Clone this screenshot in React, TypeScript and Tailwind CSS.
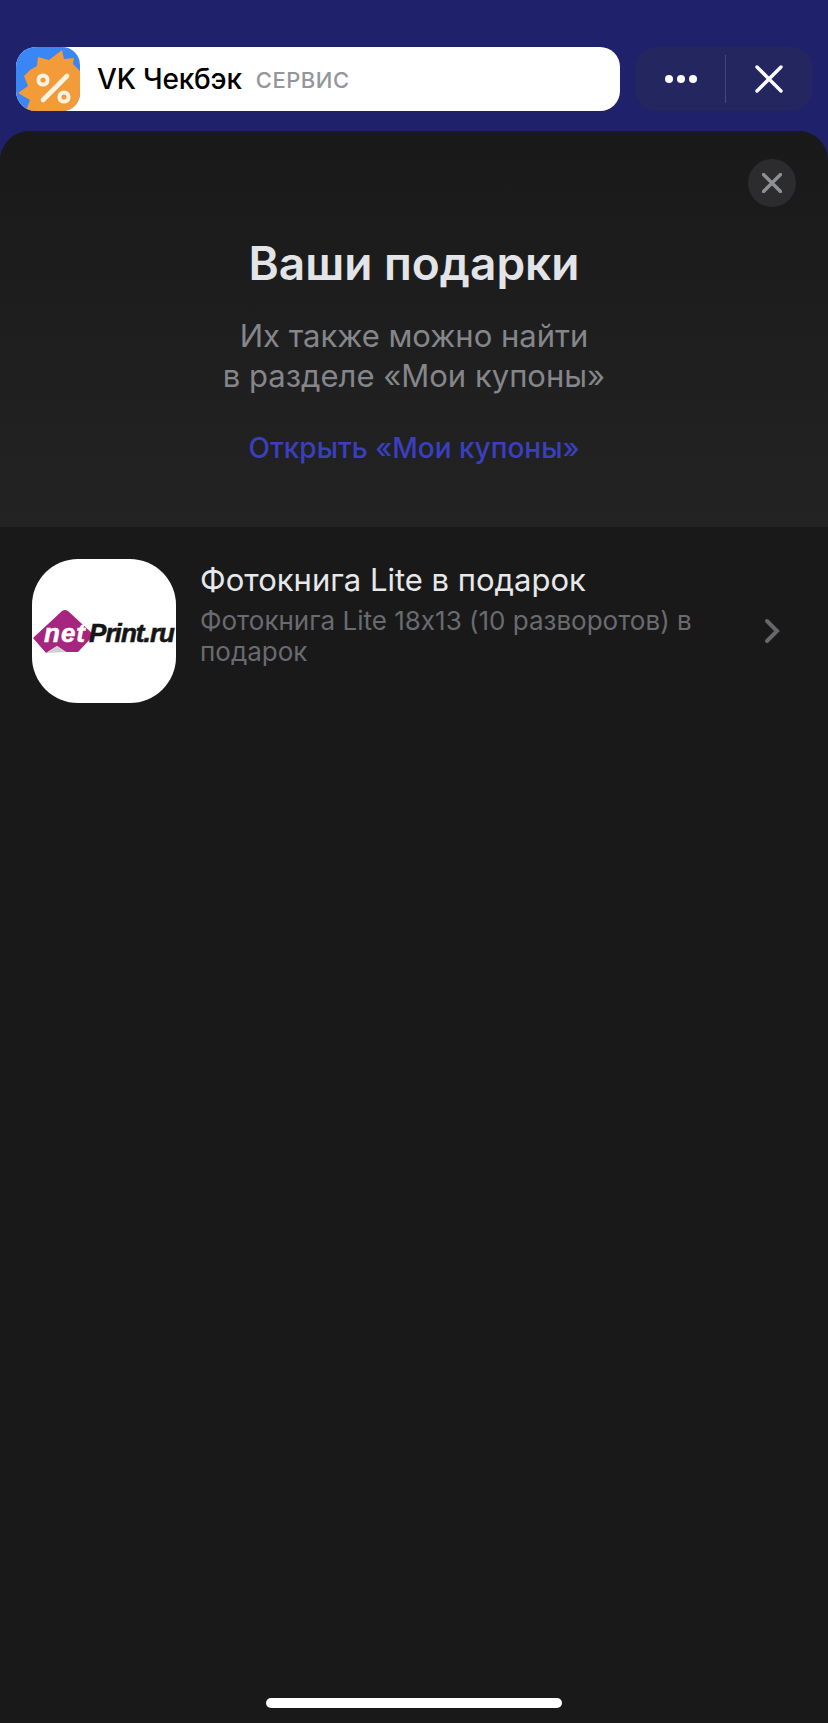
import React from "react";

const AppIcon = () => (
  <svg viewBox="0 0 64 64" className="w-16 h-16 shrink-0 rounded-[18px]">
    <rect width="64" height="64" fill="#3a86f4" />
    <path
      d="M10 64 L14 53 L2 46 L12 39 L8 29 L14 23 L21 19 L22 10 L33 13 L46 3 L48 12 L58 11 L57 17 L64 24 L64 64 Z"
      fill="#f29b38"
    />
    <circle cx="27" cy="33" r="4.6" fill="none" stroke="#fdf3e4" strokeWidth="4" />
    <circle cx="48" cy="50" r="4.6" fill="none" stroke="#fdf3e4" strokeWidth="4" />
    <path d="M27 53 L51 29" stroke="#fdf3e4" strokeWidth="4.6" strokeLinecap="round" />
  </svg>
);

const NetPrintLogo = () => (
  <svg viewBox="0 0 144 144" className="w-36 h-36">
    <path d="M1 79 L30 52 Q33 50 36 52 L62 76 L46 93 L34 93 L25 87 L14 94 Z" fill="#a6257e" />
    <path d="M14 94 L25 87 L34 93 Z" fill="#cfcfcf" />
    <text x="12" y="83" fontFamily="Liberation Sans" fontWeight="700" fontStyle="italic" fontSize="26" fill="#ffffff" stroke="#ffffff" strokeWidth="0.5" textLength="41">
      net
    </text>
    <text x="57" y="83" fontFamily="Liberation Sans" fontWeight="700" fontStyle="italic" fontSize="26" fill="#151515" stroke="#151515" strokeWidth="0.6" textLength="86">
      Print.ru
    </text>
  </svg>
);

export default function App() {
  return (
    <div className="w-[828px] h-[1723px] flex flex-col bg-[#1f226b] overflow-hidden font-['Inter',sans-serif] [font-feature-settings:'calt'_0]">
      <div className="flex gap-4 px-4 pt-[47px] pb-5">
        <div className="w-[604px] h-16 bg-white rounded-[20px] overflow-hidden flex items-center">
          <AppIcon />
          <span className="ml-[17px] text-[28px] font-medium text-black tracking-[-0.2px]">VK Чекбэк</span>
          <span className="ml-[14px] text-[22px] font-medium text-[#94969c] tracking-[0.5px] mt-[2px]">СЕРВИС</span>
        </div>
        <div className="w-[176px] h-16 rounded-[20px] bg-[#24275f] flex items-center">
          <div className="w-[89px] flex justify-center gap-1">
            <span className="w-2 h-2 rounded-full bg-white" />
            <span className="w-2 h-2 rounded-full bg-white" />
            <span className="w-2 h-2 rounded-full bg-white" />
          </div>
          <div className="w-px h-12 bg-[#44477a]" />
          <div className="flex-1 flex justify-center">
            <svg width="28" height="28" viewBox="0 0 28 28">
              <path d="M2 2 L26 26 M26 2 L2 26" stroke="#ffffff" strokeWidth="3.4" strokeLinecap="round" />
            </svg>
          </div>
        </div>
      </div>

      <div className="relative flex-1 rounded-t-[30px] bg-[#19191a] flex flex-col">
        <button className="absolute top-[28px] right-[32px] w-12 h-12 rounded-full bg-[#2c2c2e] flex items-center justify-center">
          <svg width="20" height="20" viewBox="0 0 20 20">
            <path d="M1.5 1.5 L18.5 18.5 M18.5 1.5 L1.5 18.5" stroke="#8f9094" strokeWidth="3.4" strokeLinecap="round" />
          </svg>
        </button>

        <div className="h-[396px] rounded-t-[30px] bg-gradient-to-b from-[#19191a] to-[#232324] flex flex-col items-center pt-[104px]">
          <h1 className="text-[46px] leading-[56px] font-semibold text-[#e3e4e8]">Ваши подарки</h1>
          <p className="mt-[25px] text-[31px] leading-10 text-[#85868a] text-center">
            Их также можно найти
            <br />в разделе «Мои купоны»
          </p>
          <a className="mt-[34px] text-[28px] leading-9 font-medium text-[#3a3fbe]">Открыть «Мои купоны»</a>
        </div>

        <div className="flex items-start pl-8 pr-12 pt-8">
          <div className="w-36 h-36 rounded-[46px] bg-white overflow-hidden shrink-0">
            <NetPrintLogo />
          </div>
          <div className="ml-6 flex-1 pt-[3px]">
            <div className="text-[31px] leading-9 text-[#e7e8ea]">Фотокнига Lite в подарок</div>
            <div className="mt-[7px] text-[26px] leading-[31px] text-[#6a6b6f]">
              Фотокнига Lite 18x13 (10 разворотов) в подарок
            </div>
          </div>
          <svg width="16" height="26" viewBox="0 0 16 26" className="ml-[46px] mt-[59px] shrink-0">
            <path d="M3 3 L13 13 L3 23" fill="none" stroke="#66676a" strokeWidth="4" strokeLinecap="round" />
          </svg>
        </div>

        <div className="mt-auto mb-[15px] self-center w-[296px] h-[10px] rounded-full bg-white" />
      </div>
    </div>
  );
}
